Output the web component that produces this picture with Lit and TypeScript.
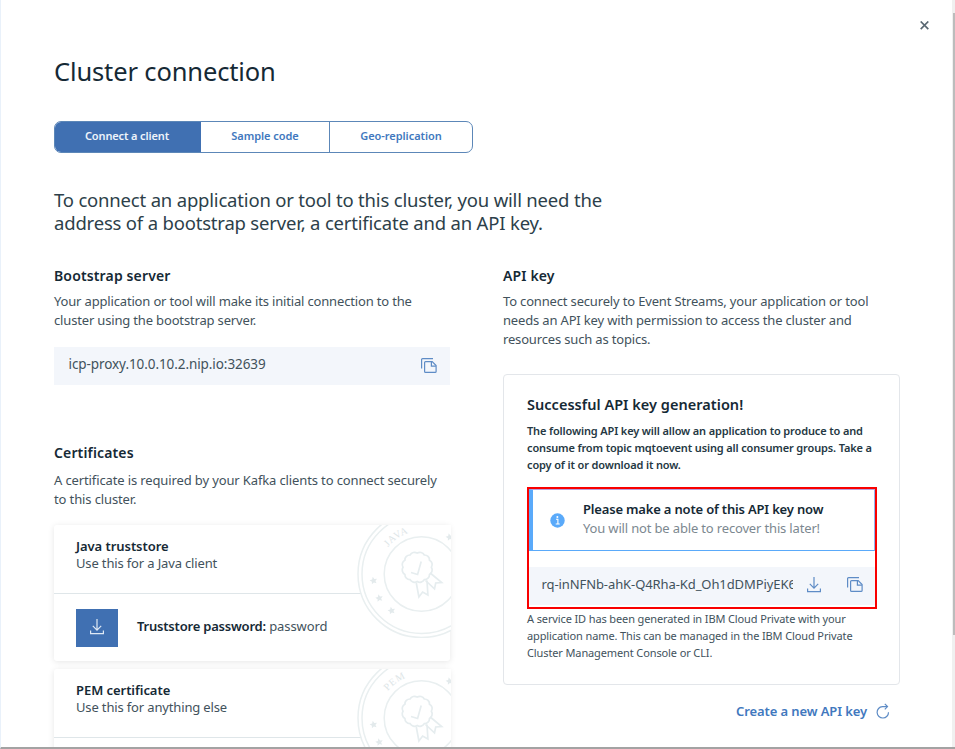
import { LitElement, html, svg, css } from "lit";
import { customElement, property } from "lit/decorators.js";

const downloadIcon = html`<svg class="download" width="16" height="18" viewBox="0 0 16 18" fill="none" stroke="currentColor" stroke-width="1.2">
  <path d="M8 1v11M3.8 7.9L8 12.1l4.2-4.2M1.6 12.6v3h12.8v-3" />
</svg>`;

const copyIcon = html`<svg class="copy" width="18" height="18" viewBox="0 0 18 18" fill="none" stroke="currentColor" stroke-width="1.2">
  <path d="M1.6 11.4V2.6q0-1 1-1H13" />
  <path d="M5.6 4.6h6.6l3.9 3.9v5.9q0 1-1 1H5.6q-1 0-1-1V5.6q0-1 1-1z" />
  <path d="M11.4 4.8v4.4h4.5" />
</svg>`;

const star = (x: number, y: number) => svg`<path class="star" transform="translate(${x} ${y}) rotate(-12)"
  d="M0-3.8L1.1-1.2 3.8-1 1.8.8 2.4 3.4 0 2-2.4 3.4-1.8.8-3.8-1-1.1-1.2z" />`;

const scallop = (cx: number, cy: number, r: number, n: number) => {
  let d = "";
  for (let i = 0; i <= n; i++) {
    const a = (i / n) * Math.PI * 2;
    const x = (cx + r * Math.cos(a)).toFixed(2);
    const y = (cy + r * Math.sin(a)).toFixed(2);
    d += i === 0 ? `M${x} ${y}` : `A5 5 0 0 1 ${x} ${y}`;
  }
  return d + "z";
};

@customElement("cert-seal")
class CertSeal extends LitElement {
  @property() label = "";

  static styles = css`
    :host { display: block; }
    svg { display: block; fill: none; stroke: #e9eff0; stroke-width: 1.5; }
    .disc { fill: #fff; }
    .star { fill: #e3eaec; stroke: none; }
    text { fill: #dde5e7; stroke: none; font: 10px "Liberation Serif", serif; letter-spacing: 0.7px; }
    .medal { stroke-width: 1.7; stroke: #e6edef; }
  `;

  render() {
    return html`<svg width="94" height="113" viewBox="357 525 94 113">
      <circle class="disc" cx="421.5" cy="574" r="63.5" />
      <circle cx="421.5" cy="574" r="59.5" />
      <circle cx="421.5" cy="574" r="37.3" />
      <path id="arc" stroke="none" d="M378.5 574A43 43 0 0 1 421.5 531" />
      <text><textPath href="#arc" startOffset="29">${this.label}</textPath></text>
      ${star(373.5, 580.5)}${star(379.2, 598)}${star(391.5, 610.5)}${star(449.5, 537)}
      <g class="medal">
        <path d=${scallop(417.2, 567.3, 14.2, 12)} />
        <path d="M411 572.5l6.6 2 3.6-13" />
        <path d="M416.3 583l2.6 14 3.7-5 5.3 3-.9-14.5" />
        <path d="M425.5 580.5l9 8.3 1.2-5.8 6-.4-11.5-9.6" />
      </g>
    </svg>`;
  }
}

@customElement("cert-card")
class CertCard extends LitElement {
  @property() heading = "";
  @property() hint = "";
  @property() seal = "";

  static styles = css`
    :host { display: block; position: relative; height: 136px; background: #fff; border-radius: 3px;
      box-shadow: 0 1px 6px rgba(0, 0, 0, 0.1); }
    .head { box-sizing: border-box; height: 69px; padding: 12.5px 22px 0; border-bottom: 1px solid #dfe6e9;
      font-size: 13px; line-height: 17px; }
    .title { font-weight: 600; color: #152935; letter-spacing: -0.05px; }
    .hint { letter-spacing: -0.15px; }
    .seal { position: absolute; top: 0; right: -1px; }
  `;

  render() {
    return html`<div class="head">
        <div class="title">${this.heading}</div>
        <div class="hint">${this.hint}</div>
      </div>
      <slot></slot>
      <cert-seal class="seal" label=${this.seal}></cert-seal>`;
  }
}

@customElement("app-root")
class AppRoot extends LitElement {
  static styles = css`
    :host { display: block; position: relative; box-sizing: border-box; width: 955px; height: 749px; overflow: hidden;
      background: #fff; border-left: 1px solid #e9f1fa; border-bottom: 2px solid #a3a3a3;
      font-family: "Noto Sans", sans-serif; font-size: 13px; line-height: 19px; color: #42525c; white-space: nowrap; }
    h1, h2, p { margin: 0; }
    svg { display: block; flex: none; }
    .page { padding: 55px 0 0 53px; }
    h1 { font-size: 25.5px; line-height: 32px; font-weight: 400; letter-spacing: -0.14px; color: #152935; }
    .tabs { display: flex; box-sizing: border-box; width: 419px; height: 32px; margin-top: 34px; border: 1px solid #5c87b8;
      border-radius: 7px; overflow: hidden; font-size: 11px; line-height: 28px; font-weight: 600; text-align: center; color: #4178be; }
    .tab { box-sizing: border-box; flex: 1; letter-spacing: -0.04px; }
    .tab.on { flex: none; width: 146px; padding-right: 2px; background: #4070b2; color: #eef4fb; letter-spacing: -0.13px; }
    .tab.mid { flex: none; width: 129px; border-right: 1px solid #5c87b8; }
    .intro { margin-top: 35px; font-size: 18.5px; line-height: 23px; letter-spacing: -0.19px; color: #2d3f4a; }
    .columns { display: flex; gap: 53px; margin-top: 32px; }
    .left { width: 396px; }
    .right { width: 397px; }
    h2 { font-size: 14px; line-height: 20px; font-weight: 600; letter-spacing: 0.14px; color: #152935; }
    .copyline { margin-top: 6px; letter-spacing: -0.165px; }
    .address { display: flex; align-items: center; justify-content: space-between; height: 38px; margin-top: 17px;
      padding: 0 12px 0 14.5px; background: #f3f6fb; font-size: 13.5px; letter-spacing: -0.08px; }
    .address span { padding-bottom: 3px; }
    .copy, .download { color: #5e8cc6; }
    .certs { margin-top: 58px; }
    .certs + .copyline { margin-top: 8px; letter-spacing: -0.125px; }
    .cards { display: flex; flex-direction: column; gap: 8px; margin-top: 16px; }
    .row { display: flex; align-items: center; gap: 19px; padding: 15px 22px; height: 38px; }
    .row b { letter-spacing: -0.2px; }
    b { font-weight: 600; color: #152935; }
    .button { display: flex; align-items: center; justify-content: center; width: 42px; height: 38px; background: #4070b2; }
    .button .download { color: #dfe9f5; margin-bottom: 2px; }
    .secret { padding-bottom: 3px; letter-spacing: -0.1px; }
    .panel { box-sizing: border-box; height: 311px; margin-top: 25px; padding: 19px 0 0 23px; border: 1px solid #e3e6ea; border-radius: 4px; }
    .panel h2 { font-size: 14.5px; letter-spacing: 0.03px; }
    .small { font-size: 11px; line-height: 17px; letter-spacing: -0.12px; }
    .small.strong { margin-top: 8px; font-weight: 600; letter-spacing: -0.14px; color: #253843; }
    .keybox { box-sizing: border-box; width: 350px; height: 122px; margin-top: 14px; border: 2px solid #f90000; }
    .notice { display: flex; align-items: center; gap: 18px; box-sizing: border-box; height: 62px; padding: 0 0 2px 17px;
      border: 1px solid #5aaafa; border-left-width: 4px; border-top-color: #b9a0dc; border-right-color: #8fb5ee; letter-spacing: -0.18px; }
    .notice svg { margin-top: 3px; }
    .later { color: #7c8890; letter-spacing: -0.16px; }
    .key { display: flex; align-items: center; height: 38px; margin-top: 16px; padding: 0 11px 0 12.5px; background: #f3f6fb; }
    .value { flex: none; width: 251px; overflow: hidden; letter-spacing: -0.09px; padding-bottom: 3px; }
    .key .download { margin: 0 24px 0 13px; }
    .key svg { position: relative; top: -1px; }
    .panel .after { margin-top: 1px; }
    .create { display: flex; align-items: center; justify-content: flex-end; gap: 8px; margin-top: 16px; padding-right: 10px;
      height: 20px; font-weight: 600; letter-spacing: -0.1px; color: #4178be; }
    .close { position: absolute; top: 21px; right: 26px; }
    .scroll { position: absolute; top: 0; right: 0; width: 3px; height: 747px; background: #f0f0f0; }
    .thumb { width: 2px; height: 622px; margin: 13px 0 0 1px; background: #bcbcbc; }
  `;

  render() {
    return html`
      <div class="page">
        <h1>Cluster connection</h1>
        <div class="tabs">
          <div class="tab on">Connect a client</div>
          <div class="tab mid">Sample code</div>
          <div class="tab">Geo-replication</div>
        </div>
        <p class="intro">To connect an application or tool to this cluster, you will need the<br />address of a bootstrap server, a certificate and an API key.</p>
        <div class="columns">
          <div class="left">
            <h2>Bootstrap server</h2>
            <p class="copyline">Your application or tool will make its initial connection to the<br />cluster using the bootstrap server.</p>
            <div class="address"><span>icp-proxy.10.0.10.2.nip.io:32639</span>${copyIcon}</div>
            <h2 class="certs">Certificates</h2>
            <p class="copyline">A certificate is required by your Kafka clients to connect securely<br />to this cluster.</p>
            <div class="cards">
              <cert-card heading="Java truststore" hint="Use this for a Java client" seal="JAVA">
                <div class="row">
                  <div class="button">${downloadIcon}</div>
                  <div class="secret"><b>Truststore password:</b> password</div>
                </div>
              </cert-card>
              <cert-card heading="PEM certificate" hint="Use this for anything else" seal="PEM"></cert-card>
            </div>
          </div>
          <div class="right">
            <h2>API key</h2>
            <p class="copyline">To connect securely to Event Streams, your application or tool<br />needs an API key with permission to access the cluster and<br />resources such as topics.</p>
            <div class="panel">
              <h2>Successful API key generation!</h2>
              <p class="small strong">The following API key will allow an application to produce to and<br />consume from topic mqtoevent using all consumer groups. Take a<br />copy of it or download it now.</p>
              <div class="keybox">
                <div class="notice">
                  <svg width="15" height="15" viewBox="0 0 15 15">
                    <circle cx="7.5" cy="7.5" r="7.2" fill="#5aaafa" />
                    <path d="M6 6.3h1.9v4.4M5.7 11h4" fill="none" stroke="#fff" stroke-width="1.1" />
                    <circle cx="7.4" cy="3.9" r="1" fill="#fff" />
                  </svg>
                  <div>
                    <b>Please make a note of this API key now</b>
                    <div class="later">You will not be able to recover this later!</div>
                  </div>
                </div>
                <div class="key"><div class="value">rq-inNFNb-ahK-Q4Rha-Kd_Oh1dDMPiyEK6</div>${downloadIcon}${copyIcon}</div>
              </div>
              <p class="small after">A service ID has been generated in IBM Cloud Private with your<br />application name. This can be managed in the IBM Cloud Private<br />Cluster Management Console or CLI.</p>
            </div>
            <div class="create">
              <span>Create a new API key</span>
              <svg width="15" height="16" viewBox="0 0 15 16" fill="none" stroke="#5e8cc6" stroke-width="1.2">
                <path d="M12.2 3.6H7.4a5.7 5.7 0 1 0 6.1 5.6" />
                <path d="M9.8.9l2.7 2.7-2.7 2.7" />
              </svg>
            </div>
          </div>
        </div>
      </div>
      <svg class="close" width="9" height="9" viewBox="0 0 9 9" stroke="#5a6872" stroke-width="1.7"><path d="M.7.5l7.6 7.6M8.3.5L.7 8.1" /></svg>
      <div class="scroll"><div class="thumb"></div></div>
    `;
  }
}
